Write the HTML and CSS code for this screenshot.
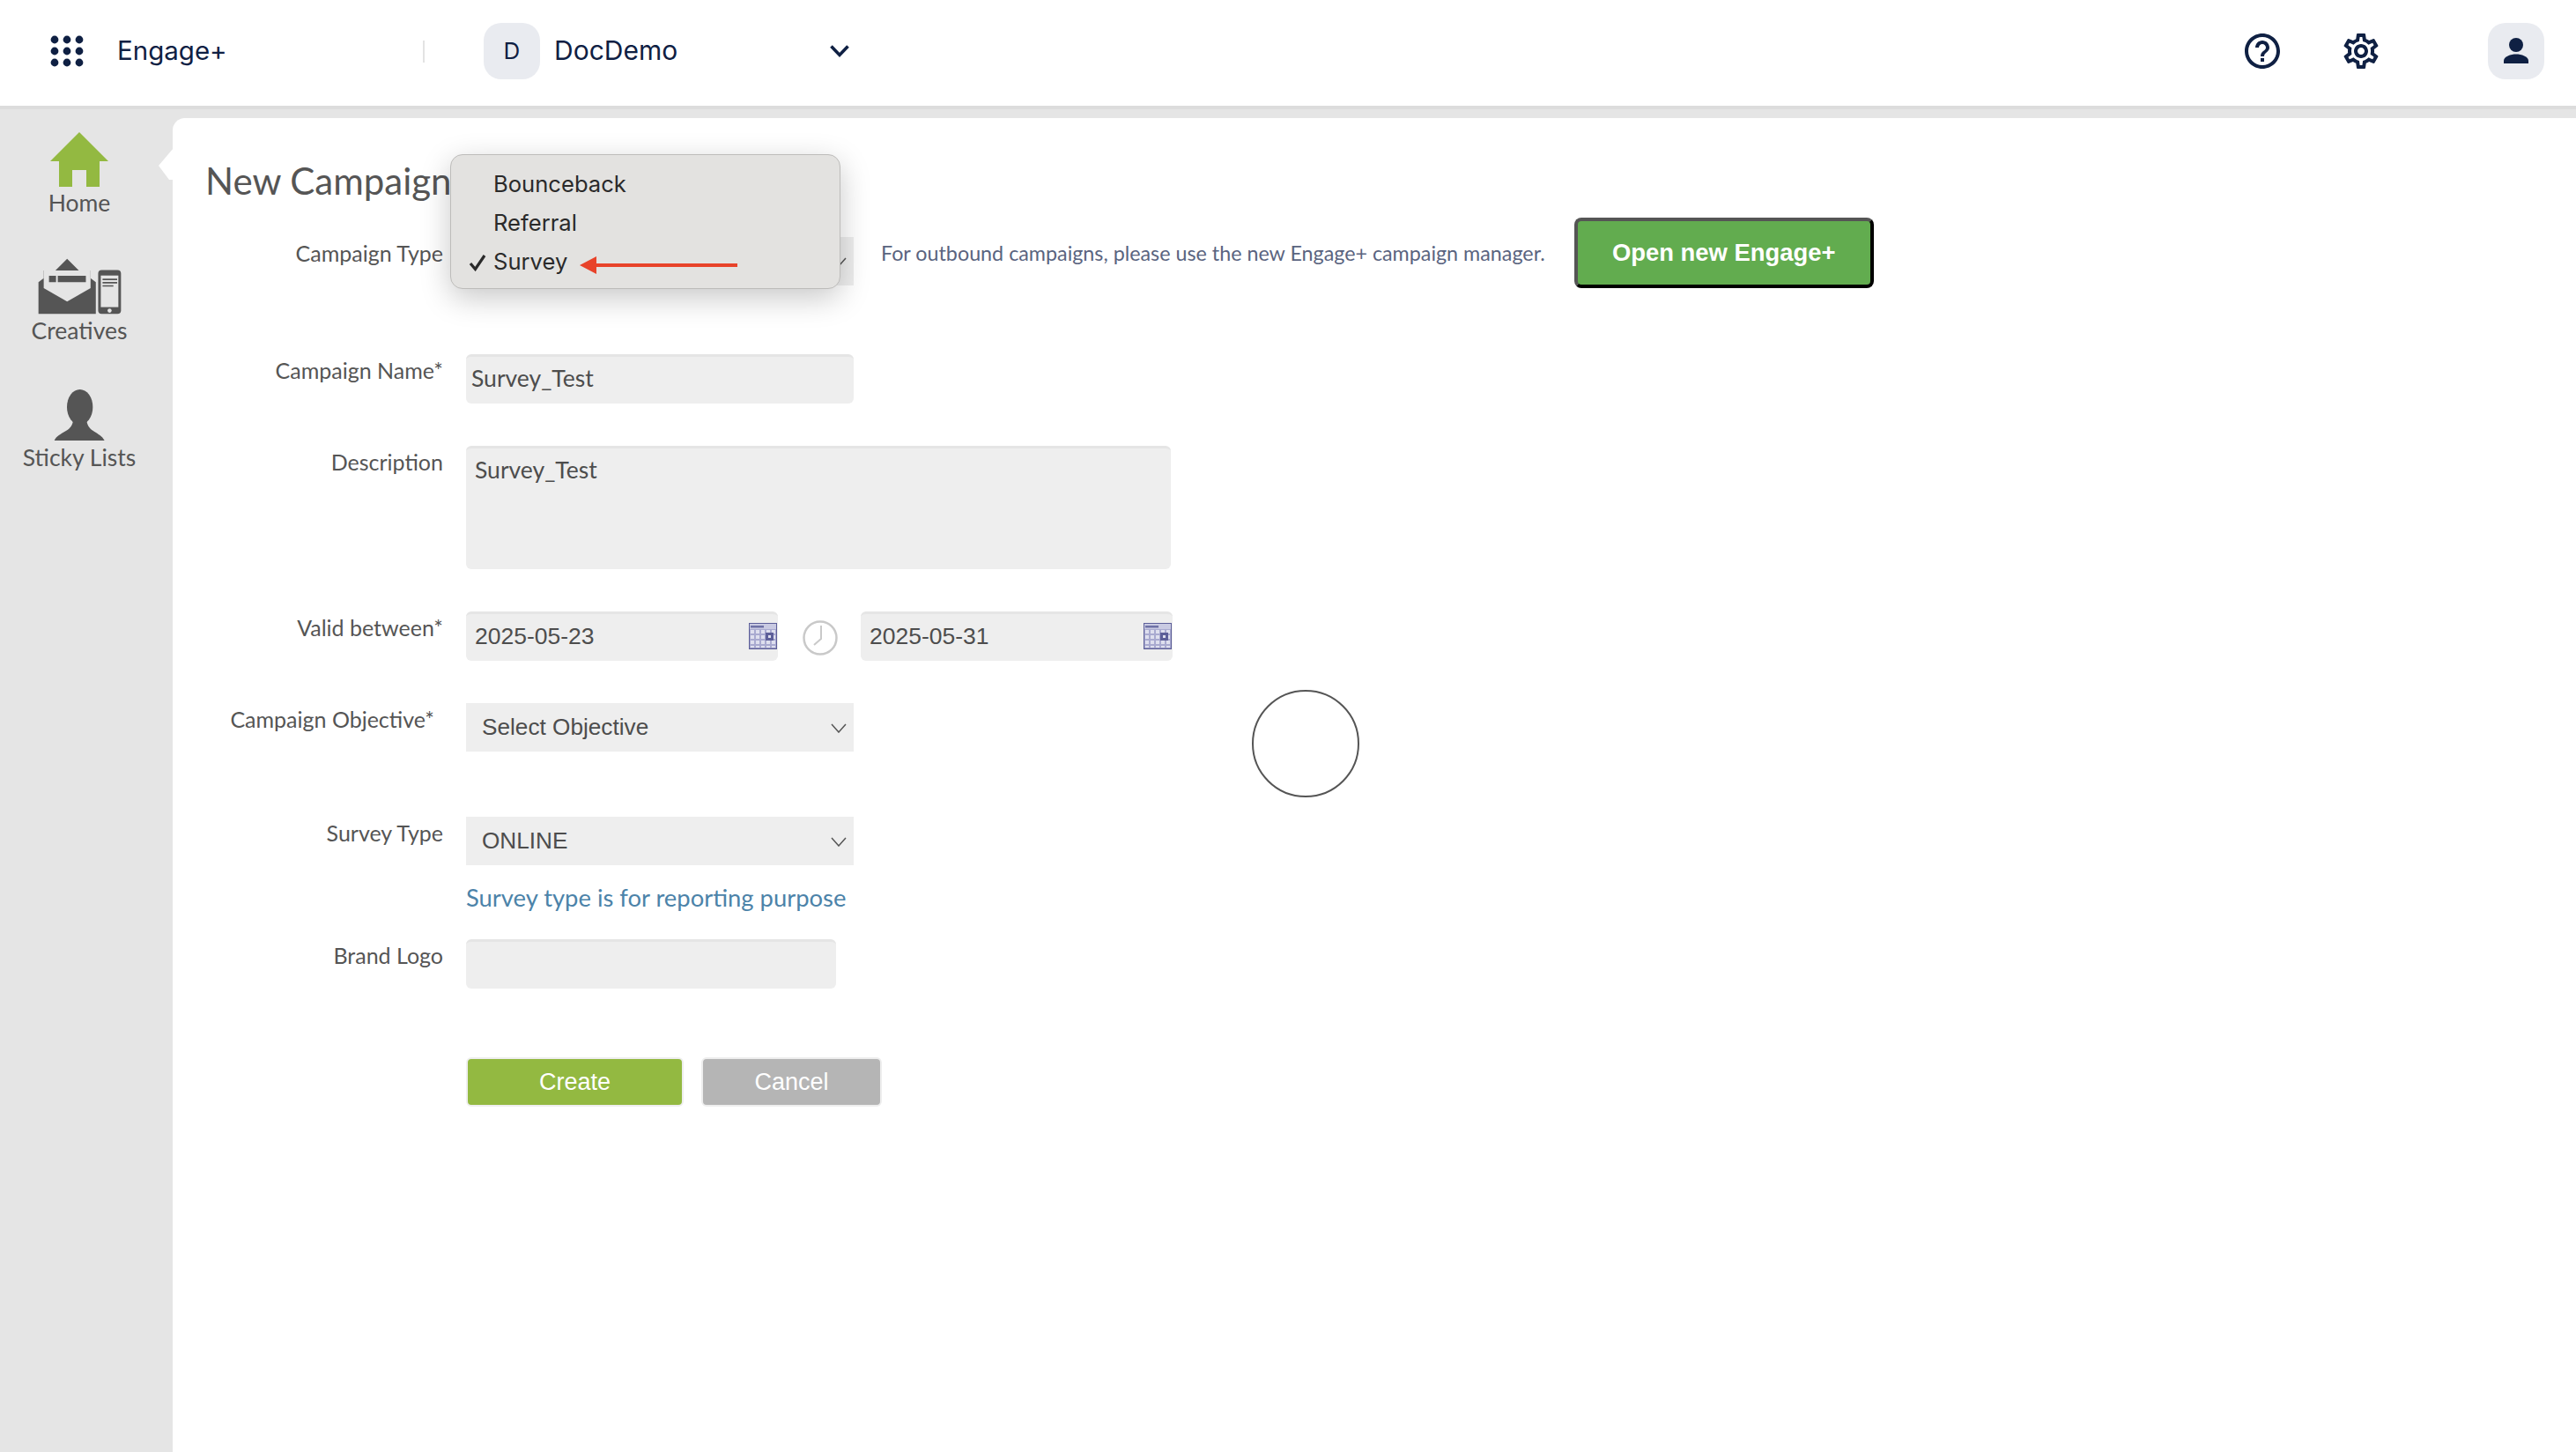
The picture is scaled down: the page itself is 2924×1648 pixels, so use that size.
FILE: index.html
```html
<!DOCTYPE html>
<html lang="en">
<head>
<meta charset="utf-8">
<title>New Campaign</title>
<link rel="stylesheet" href="styles.css">
</head>
<body>
<header class="topbar">
  <svg class="apps" width="38" height="38" viewBox="0 0 38 38"><g fill="#0f2043"><circle cx="5" cy="6" r="4.4"/><circle cx="19" cy="6" r="4.4"/><circle cx="33" cy="6" r="4.4"/><circle cx="5" cy="19" r="4.4"/><circle cx="19" cy="19" r="4.4"/><circle cx="33" cy="19" r="4.4"/><circle cx="5" cy="32" r="4.4"/><circle cx="19" cy="32" r="4.4"/><circle cx="33" cy="32" r="4.4"/></g></svg>
  <span class="app-name">Engage+</span>
  <span class="divider"></span>
  <span class="badge badge-org">D</span>
  <span class="org-name">DocDemo</span>
  <svg class="org-chevron" width="24" height="16" viewBox="0 0 24 16"><path d="M2.500 2.500 12 12.500 21.500 2.500" fill="none" stroke="#0f2043" stroke-width="3.600"/></svg>
  <span class="spacer"></span>
  <svg class="tool" width="48" height="48" viewBox="0 0 24 24"><path fill="#0f2043" d="M11 18h2v-2h-2v2zm1-16C6.480 2 2 6.480 2 12s4.480 10 10 10 10-4.480 10-10S17.520 2 12 2zm0 18c-4.410 0-8-3.590-8-8s3.590-8 8-8 8 3.590 8 8-3.590 8-8 8zm0-14c-2.210 0-4 1.790-4 4h2c0-1.100.9-2 2-2s2 .9 2 2c0 2-3 1.750-3 5h2c0-2.250 3-2.500 3-5 0-2.210-1.790-4-4-4z"/></svg>
  <svg class="tool tool-gear" width="48" height="48" viewBox="0 0 24 24"><path fill="#0f2043" d="M19.430 12.980c.04-.32.07-.64.07-.98 0-.34-.03-.66-.07-.98l2.110-1.650c.19-.15.24-.42.12-.64l-2-3.460c-.09-.16-.26-.25-.44-.25-.06 0-.12.01-.17.03l-2.490 1c-.52-.4-1.080-.73-1.690-.98l-.38-2.650C14.460 2.180 14.250 2 14 2h-4c-.25 0-.46.18-.49.42l-.38 2.650c-.61.25-1.170.59-1.690.98l-2.490-1c-.06-.02-.12-.03-.18-.03-.17 0-.34.09-.43.25l-2 3.460c-.13.22-.07.49.12.64l2.110 1.650c-.04.32-.07.65-.07.98 0 .33.03.66.07.98l-2.110 1.650c-.19.15-.24.42-.12.64l2 3.460c.09.16.26.25.44.25.06 0 .12-.01.17-.03l2.490-1c.52.4 1.080.73 1.690.98l.38 2.650c.03.24.24.42.49.42h4c.25 0 .46-.18.49-.42l.38-2.650c.61-.25 1.170-.59 1.690-.98l2.490 1c.06.02.12.03.18.03.17 0 .34-.09.43-.25l2-3.460c.12-.22.07-.49-.12-.64l-2.110-1.650zm-1.980-1.710c.04.31.05.52.05.73 0 .21-.02.43-.05.73l-.14 1.130.89.7 1.080.84-.7 1.210-1.270-.51-1.040-.42-.9.68c-.43.32-.84.56-1.250.73l-1.060.43-.16 1.130-.2 1.350h-1.400l-.19-1.350-.16-1.130-1.060-.43c-.43-.18-.83-.41-1.230-.71l-.91-.7-1.060.43-1.270.51-.7-1.210 1.080-.84.89-.7-.14-1.130c-.03-.31-.05-.54-.05-.74s.02-.43.05-.73l.14-1.130-.89-.7-1.080-.84.7-1.210 1.270.51 1.040.42.9-.68c.43-.32.84-.56 1.250-.73l1.060-.43.16-1.130.2-1.350h1.390l.19 1.350.16 1.130 1.060.43c.43.18.83.41 1.230.71l.91.7 1.060-.43 1.270-.51.7 1.210-1.070.85-.89.7.14 1.130zM12 8c-2.210 0-4 1.790-4 4s1.790 4 4 4 4-1.790 4-4-1.790-4-4-4zm0 6c-1.100 0-2-.9-2-2s.9-2 2-2 2 .9 2 2-.9 2-2 2z"/></svg>
  <span class="badge badge-user">
    <svg width="30" height="30" viewBox="0 0 30 30"><circle cx="15" cy="8" r="8" fill="#0f2043"/><path d="M1 29v-3c0-5 8-7.500 14-7.500S29 21 29 26v3z" fill="#0f2043"/></svg>
  </span>
</header>

<div class="shell">
  <nav class="sidebar">
    <a class="nav-item nav-home">
      <svg width="68" height="62" viewBox="0 0 68 62"><path fill="#93b941" d="M34 0 67 33H57V62H42V43H26V62H11V33H1z"/></svg>
      <span>Home</span>
    </a>
    <a class="nav-item nav-creatives">
      <svg width="95" height="64" viewBox="130 488 286 192"><path fill="#555" d="M132 570 150 556V530H190L230 490 270 530H310V556L328 570V678H132z"/><path fill="#e5e5e5" d="M150 530H310V590L230 636 150 590z"/><path fill="#555" d="M168 548H192V570H168zM198 548H294V570H198z"/><rect x="336" y="528" width="78" height="150" rx="12" fill="#555"/><path fill="#e5e5e5" d="M345 547H405V655H345z"/><path fill="#555" d="M351 558H401V563H351zM351 569H401V574H351zM351 580H388V585H351z"/><circle cx="375" cy="667" r="7" fill="#e5e5e5"/></svg>
      <span>Creatives</span>
    </a>
    <a class="nav-item nav-sticky">
      <svg width="58" height="58" viewBox="188 935 174 174"><ellipse cx="277" cy="995" rx="44" ry="60" fill="#555"/><path fill="#555" d="M190 1109C205 1078 250 1082 254 1040H300C304 1082 345 1078 361 1109z"/></svg>
      <span>Sticky Lists</span>
    </a>
  </nav>

  <main class="content">
    <svg class="notch" width="17" height="36" viewBox="0 0 17 36"><path fill="#fff" d="M17 0 0 20 12 36H17z"/></svg>
    <h1 class="title">New Campaign</h1>

    <form class="form">
      <div class="row row-type">
        <div class="label">Campaign Type</div>
        <div class="field field-select"><span></span>
          <svg class="chev" width="18" height="11" viewBox="0 0 18 11"><path d="M1 1 9 10 17 1" fill="none" stroke="#555" stroke-width="1.500"/></svg>
        </div>
        <p class="note">For outbound campaigns, please use the new Engage+ campaign manager.</p>
        <a class="open-btn">Open new Engage+</a>
      </div>

      <div class="row row-name">
        <div class="label">Campaign Name*</div>
        <div class="field field-input field-name">Survey_Test</div>
      </div>

      <div class="row row-gap">
        <div class="label">Description</div>
        <div class="field field-input field-area">Survey_Test</div>
      </div>

      <div class="row row-gap">
        <div class="label">Valid between*</div>
        <div class="field field-input field-date">2025-05-23
          <svg class="cal" width="32" height="30" viewBox="0 0 32 30"><defs><pattern id="calgrid" width="6" height="6" patternUnits="userSpaceOnUse" x="1" y="7"><rect width="6" height="6" fill="#a9aad0"/><rect width="4" height="4" x="1" y="1" fill="#dedfee"/></pattern></defs><rect width="32" height="30" fill="#5d5f99"/><rect x="1" y="1" width="30" height="27.500" fill="#c9cae2"/><rect x="1" y="7" width="30" height="21" fill="url(#calgrid)"/><rect x="2" y="3" width="15" height="2.500" fill="#6f71a6"/><rect x="19" y="11" width="9" height="9" fill="#5d5f99"/><rect x="22" y="14" width="3" height="3" fill="#dedfee"/></svg>
        </div>
        <svg class="clock" width="40" height="40" viewBox="0 0 40 40"><circle cx="20" cy="20" r="18.500" fill="none" stroke="#c9c9c9" stroke-width="2.500"/><path d="M21 6V21L13 28" fill="none" stroke="#c9c9c9" stroke-width="2"/></svg>
        <div class="field field-input field-date">2025-05-31
          <svg class="cal" width="32" height="30" viewBox="0 0 32 30"><rect width="32" height="30" fill="#5d5f99"/><rect x="1" y="1" width="30" height="27.500" fill="#c9cae2"/><rect x="1" y="7" width="30" height="21" fill="url(#calgrid)"/><rect x="2" y="3" width="15" height="2.500" fill="#6f71a6"/><rect x="19" y="11" width="9" height="9" fill="#5d5f99"/><rect x="22" y="14" width="3" height="3" fill="#dedfee"/></svg>
        </div>
      </div>

      <div class="row row-gap">
        <div class="label label-obj">Campaign Objective*</div>
        <div class="field field-select"><span>Select Objective</span>
          <svg class="chev" width="18" height="11" viewBox="0 0 18 11"><path d="M1 1 9 10 17 1" fill="none" stroke="#555" stroke-width="1.500"/></svg>
        </div>
      </div>

      <div class="row row-survey">
        <div class="label">Survey Type</div>
        <div class="field field-select"><span>ONLINE</span>
          <svg class="chev" width="18" height="11" viewBox="0 0 18 11"><path d="M1 1 9 10 17 1" fill="none" stroke="#555" stroke-width="1.500"/></svg>
        </div>
      </div>
      <p class="hint">Survey type is for reporting purpose</p>

      <div class="row row-brand">
        <div class="label">Brand Logo</div>
        <div class="field field-input field-brand"></div>
      </div>

      <div class="actions">
        <a class="btn btn-create">Create</a>
        <a class="btn btn-cancel">Cancel</a>
      </div>
    </form>

    <div class="menu">
      <div class="menu-item">Bounceback</div>
      <div class="menu-item">Referral</div>
      <div class="menu-item"><svg class="check" width="20" height="20" viewBox="0 0 20 20"><path d="M2 11 7.500 17.500 18 2" fill="none" stroke="#2a2a2a" stroke-width="3.200"/></svg>Survey</div>
      <svg class="arrow" width="180" height="20" viewBox="0 0 180 20"><path fill="#e8432a" d="M0 10 19 0V8H179V12H19V20z"/></svg>
    </div>

    <div class="ring"></div>
  </main>
</div>
</body>
</html>
```

FILE: styles.css
```css
* { box-sizing: border-box; }
html, body { margin: 0; height: 100%; }
body {
  display: flex;
  flex-direction: column;
  overflow: hidden;
  background: #e5e5e5;
  font-family: "Lato", "Open Sans", sans-serif;
  color: #555;
}
.topbar {
  height: 124px;
  flex: none;
  display: flex;
  align-items: center;
  background: #fff;
  border-bottom: 4px solid #dcdcdc;
  padding: 0 36px 4px 57px;
  font-family: "Inter", "Roboto", sans-serif;
  color: #0f2043;
}
.app-name { font-size: 29.500px; margin: -2px 0 0 38px; width: 347px; }
.divider { width: 2px; height: 25px; background: #e3e3e3; }
.badge {
  display: flex;
  align-items: center;
  justify-content: center;
  width: 64px;
  height: 64px;
  border-radius: 20px;
  background: #e9ebf0;
}
.badge-org { margin-left: 67px; font-size: 26px; padding-bottom: 2px; }
.org-name { font-size: 30px; margin: -2px 0 0 16px; width: 312px; }
.org-chevron { flex: none; }
.spacer { flex: 1; }
.tool-gear { margin-left: 64px; }
.badge-user { margin-left: 120px; }

.shell { flex: 1; display: flex; min-height: 0; }
.sidebar {
  width: 196px;
  flex: none;
  padding: 26px 16px 0 0;
}
.nav-item {
  display: flex;
  flex-direction: column;
  align-items: center;
  font-size: 26.500px;
  line-height: 32px;
  color: #555;
  white-space: nowrap;
}
.nav-item span { margin-top: 2px; }
.nav-creatives { margin-top: 47px; }
.nav-sticky { margin-top: 51px; }
.nav-sticky span { margin-top: 3px; }

.content {
  flex: 1;
  position: relative;
  background: #fff;
  margin-top: 10px;
  border-top-left-radius: 14px;
  padding-left: 37px;
}
.notch { position: absolute; left: -16px; top: 34px; }
.title {
  margin: 0;
  padding-top: 47px;
  font-size: 42px;
  line-height: 48px;
  font-weight: 400;
  color: #555;
}
.form { margin-left: -37px; }
.row { display: flex; align-items: flex-start; }
.row-type { margin-top: 40px; }
.row-name { margin-top: 75px; }
.row-gap { margin-top: 48px; }
.row-survey { margin-top: 74px; }
.row-brand { margin-top: 27px; }
.label {
  width: 307px;
  margin-right: 26px;
  flex: none;
  text-align: right;
  font-size: 25px;
  line-height: 36px;
  color: #555;
}
.label-obj { padding-right: 10px; }
.field {
  flex: none;
  position: relative;
  background: #eee;
  font-size: 26.500px;
  color: #4d4d4d;
}
.field-select {
  width: 440px;
  height: 55px;
  display: flex;
  align-items: center;
  padding-left: 18px;
  font-size: 26.200px;
  font-family: "Liberation Sans", Arial, sans-serif;
}
.chev { position: absolute; right: 8px; top: 23px; }
.field-input {
  border-top: 3px solid #e5e5e5;
  border-radius: 6px;
  height: 56px;
}
.field-name {
  width: 440px;
  padding: 6px 0 0 6px;
  line-height: 36px;
}
.field-area {
  width: 800px;
  height: 140px;
  padding: 6px 0 0 10px;
  line-height: 36px;
}
.field-date {
  width: 354px;
  padding: 7px 0 0 10px;
  line-height: 36px;
  font-size: 26.500px;
  font-family: "Liberation Sans", Arial, sans-serif;
}
.cal { position: absolute; right: 1px; top: 10px; }
.clock { flex: none; margin: 10px 26px 0 28px; }
.field-brand { width: 420px; }
.note {
  margin: 0 0 0 31px;
  font-size: 23.300px;
  line-height: 36px;
  color: #5a6480;
  white-space: nowrap;
}
.open-btn {
  margin: -22px 0 0 33px;
  width: 340px;
  height: 80px;
  display: flex;
  align-items: center;
  justify-content: center;
  background: #62ac4f;
  border: 4px solid;
  border-color: #555 #000 #000 #555;
  border-radius: 8px;
  color: #fff;
  font: 700 27.400px "Liberation Sans", Arial, sans-serif;
}
.hint {
  margin: 17px 0 0 333px;
  font-size: 27.400px;
  line-height: 40px;
  color: #4c83a9;
  white-space: nowrap;
}
.actions {
  display: flex;
  gap: 20px;
  margin: 78px 0 0 333px;
}
.btn {
  height: 56px;
  display: flex;
  align-items: center;
  justify-content: center;
  border: 2px solid #eee;
  border-radius: 6px;
  color: #fff;
  font: 400 27px "Liberation Sans", Arial, sans-serif;
}
.btn-create { width: 247px; background: #93b941; }
.btn-cancel { width: 205px; background: #b5b5b5; }

.menu {
  position: absolute;
  left: 315px;
  top: 41px;
  width: 443px;
  height: 153px;
  padding-top: 11px;
  background: #e3e2e0;
  border: 1px solid #bdbcba;
  border-radius: 14px;
  box-shadow: 0 10px 34px rgba(0, 0, 0, .22);
  font-family: "Inter", "Roboto", sans-serif;
  font-size: 25.600px;
  color: #2a2a2a;
}
.menu-item {
  position: relative;
  height: 44px;
  line-height: 44px;
  padding-left: 48px;
}
.check { position: absolute; left: 20px; top: 13px; }
.arrow { position: absolute; left: 146px; top: 115px; }
.ring {
  position: absolute;
  left: 1225px;
  top: 649px;
  width: 122px;
  height: 122px;
  border: 2px solid #555;
  border-radius: 50%;
}
```
